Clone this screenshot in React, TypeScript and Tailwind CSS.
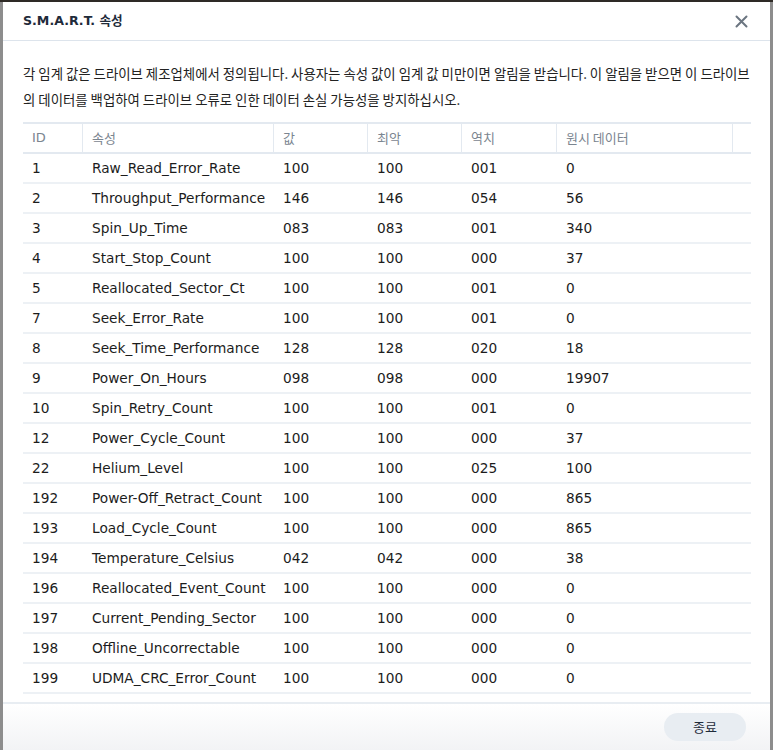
import React from "react";

const rows: [string, string, string, string, string, string][] = [
  ["1", "Raw_Read_Error_Rate", "100", "100", "001", "0"],
  ["2", "Throughput_Performance", "146", "146", "054", "56"],
  ["3", "Spin_Up_Time", "083", "083", "001", "340"],
  ["4", "Start_Stop_Count", "100", "100", "000", "37"],
  ["5", "Reallocated_Sector_Ct", "100", "100", "001", "0"],
  ["7", "Seek_Error_Rate", "100", "100", "001", "0"],
  ["8", "Seek_Time_Performance", "128", "128", "020", "18"],
  ["9", "Power_On_Hours", "098", "098", "000", "19907"],
  ["10", "Spin_Retry_Count", "100", "100", "001", "0"],
  ["12", "Power_Cycle_Count", "100", "100", "000", "37"],
  ["22", "Helium_Level", "100", "100", "025", "100"],
  ["192", "Power-Off_Retract_Count", "100", "100", "000", "865"],
  ["193", "Load_Cycle_Count", "100", "100", "000", "865"],
  ["194", "Temperature_Celsius", "042", "042", "000", "38"],
  ["196", "Reallocated_Event_Count", "100", "100", "000", "0"],
  ["197", "Current_Pending_Sector", "100", "100", "000", "0"],
  ["198", "Offline_Uncorrectable", "100", "100", "000", "0"],
  ["199", "UDMA_CRC_Error_Count", "100", "100", "000", "0"],
];

const grid = "grid grid-cols-[60px_191px_94px_94px_95px_176px_18px]";
const headCell =
  "flex h-full items-center border-r border-[#e3e9f0] pl-[9px] font-['Noto_Sans_CJK_KR',sans-serif]";

export default function App() {
  return (
    <div className="h-[750px] w-[773px] overflow-hidden border-t-2 border-[#2e2a26] bg-[#8d8d8d] px-[3px] font-['DejaVu_Sans','Noto_Sans_CJK_KR',sans-serif]">
      <div className="flex h-[748px] flex-col bg-white">
        <div className="flex h-[39px] items-center justify-between border-b border-[#dde4ec] pl-5 pr-[22px]">
          <div className="text-[12.6px] font-bold text-[#1f2b3a]">
            S.M.A.R.T. <span className="font-['Noto_Sans_CJK_KR',sans-serif]">속성</span>
          </div>
          <svg width="13" height="13" viewBox="0 0 13 13" className="text-[#6b7580]">
            <path d="M1.5 1.5 L11.5 11.5 M11.5 1.5 L1.5 11.5" stroke="currentColor" strokeWidth="2" strokeLinecap="round" />
          </svg>
        </div>
        <div className="pl-5 pr-2 pt-[19px] font-['Noto_Sans_CJK_KR',sans-serif] text-[13.4px] leading-[26px] text-[#222]">
          <div className="whitespace-nowrap">
            각 임계 값은 드라이브 제조업체에서 정의됩니다. 사용자는 속성 값이 임계 값 미만이면 알림을 받습니다. 이 알림을 받으면 이 드라이브
          </div>
          <div className="whitespace-nowrap">
            의 데이터를 백업하여 드라이브 오류로 인한 데이터 손실 가능성을 방지하십시오.
          </div>
        </div>
        <div className="ml-5 mt-[10px] w-[728px] flex-1">
          <div className={`${grid} h-[32px] items-center border-y-2 border-[#e3e9f0] text-[13px] text-[#7b8590]`}>
            <div className="flex h-full items-center border-r border-[#e3e9f0] pl-[9px]">ID</div>
            <div className={headCell}>속성</div>
            <div className={headCell}>값</div>
            <div className={headCell}>최악</div>
            <div className={headCell}>역치</div>
            <div className={headCell}>원시 데이터</div>
            <div />
          </div>
          {rows.map((r) => (
            <div
              key={r[0]}
              className={`${grid} h-[30px] items-center border-b-2 border-[#edf1f5] text-[13.7px] text-[#1c1c1c]`}
            >
              {r.map((c, i) => (
                <div key={i} className="whitespace-nowrap pl-[9px]">
                  {c}
                </div>
              ))}
              <div />
            </div>
          ))}
        </div>
        <div className="flex h-[48px] items-start justify-end border-t-2 border-[#e8edf2] bg-gradient-to-b from-white to-[#f2f3f5] pr-[24px] pt-[9px]">
          <button className="h-[28px] w-[82px] rounded-full bg-[#e8edf2] font-['Noto_Sans_CJK_KR',sans-serif] text-[13px] text-[#1f2b3a]">
            종료
          </button>
        </div>
      </div>
    </div>
  );
}
